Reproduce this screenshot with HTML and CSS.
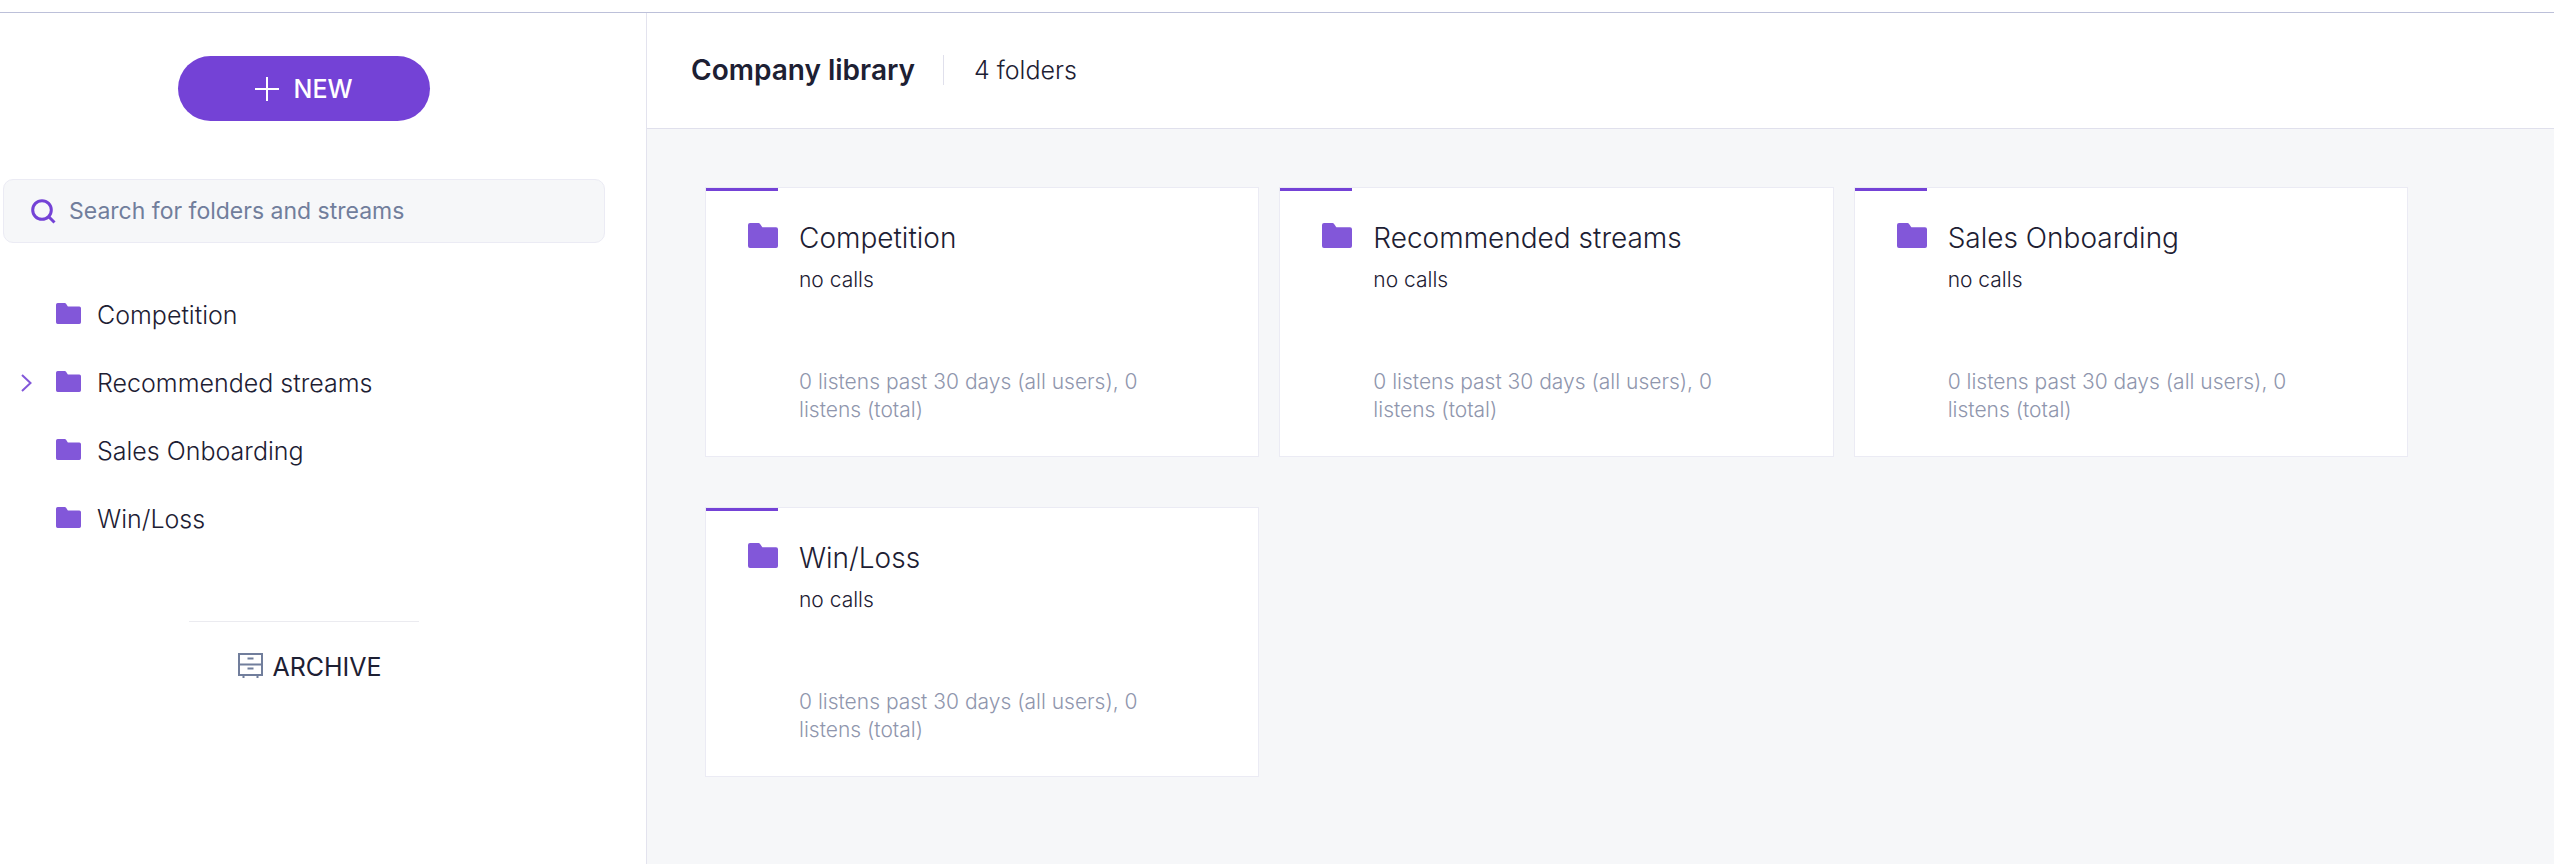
FILE: index.html
```html
<!DOCTYPE html>
<html lang="en">
<head>
  <meta charset="UTF-8">
  <meta name="viewport" content="width=device-width, initial-scale=1.0">
  <title>Company library</title>
  <link rel="stylesheet" href="styles.css">
</head>
<body>
  <!-- Shared icon -->
  <svg class="sprite" aria-hidden="true">
    <symbol id="folder" viewBox="0 0 30 25" preserveAspectRatio="none">
      <path d="M2 0h8.500q1 0 1.600.9L14 3.800q.3.500 1 .5h13q2 0 2 2V23q0 2-2 2H2q-2 0-2-2V2q0-2 2-2z"/>
    </symbol>
  </svg>

  <div class="top-line"></div>

  <div class="layout">
    <!-- Sidebar -->
    <aside class="sidebar">
      <button type="button" class="new-btn">
        <svg width="24" height="24" viewBox="0 0 24 24"><path d="M12 0v24M0 12h24"/></svg>
        NEW
      </button>

      <label class="search">
        <svg width="25" height="25" viewBox="0 0 25 25"><circle cx="11" cy="11" r="9.300"/><path d="M17.500 17.500l6 6"/></svg>
        <input type="text" placeholder="Search for folders and streams" aria-label="Search for folders and streams">
      </label>

      <ul class="tree">
        <li>
          <a href="#"><svg class="folder"><use href="#folder"/></svg>Competition</a>
        </li>
        <li>
          <button type="button" class="expand" aria-label="Expand">
            <svg width="11" height="18" viewBox="0 0 11 18"><path d="M1 1l8.500 8L1 17"/></svg>
          </button>
          <a href="#"><svg class="folder"><use href="#folder"/></svg>Recommended streams</a>
        </li>
        <li>
          <a href="#"><svg class="folder"><use href="#folder"/></svg>Sales Onboarding</a>
        </li>
        <li>
          <a href="#"><svg class="folder"><use href="#folder"/></svg>Win/Loss</a>
        </li>
      </ul>

      <hr class="divider">

      <a href="#" class="archive">
        <svg width="25" height="25" viewBox="0 0 25 25"><path d="M1 1h23v21H1zM1 11.500h23M9.500 5.500h6M9.500 15.500h6M5.500 22v3M19.500 22v3"/></svg>
        ARCHIVE
      </a>
    </aside>

    <!-- Library -->
    <main class="content">
      <header class="header">
        <h1>Company library</h1>
        <span class="count">4 folders</span>
      </header>

      <div class="cards">
        <article class="card">
          <svg class="folder"><use href="#folder"/></svg>
          <div class="card-body">
            <h2>Competition</h2>
            <p class="calls">no calls</p>
            <p class="listens">0 listens past 30 days (all users), 0 listens (total)</p>
          </div>
        </article>
        <article class="card">
          <svg class="folder"><use href="#folder"/></svg>
          <div class="card-body">
            <h2>Recommended streams</h2>
            <p class="calls">no calls</p>
            <p class="listens">0 listens past 30 days (all users), 0 listens (total)</p>
          </div>
        </article>
        <article class="card">
          <svg class="folder"><use href="#folder"/></svg>
          <div class="card-body">
            <h2>Sales Onboarding</h2>
            <p class="calls">no calls</p>
            <p class="listens">0 listens past 30 days (all users), 0 listens (total)</p>
          </div>
        </article>
        <article class="card">
          <svg class="folder"><use href="#folder"/></svg>
          <div class="card-body">
            <h2>Win/Loss</h2>
            <p class="calls">no calls</p>
            <p class="listens">0 listens past 30 days (all users), 0 listens (total)</p>
          </div>
        </article>
      </div>
    </main>
  </div>
</body>
</html>
```
FILE: styles.css
```css
* {
  margin: 0;
  padding: 0;
  box-sizing: border-box;
}

body {
  display: flex;
  flex-direction: column;
  min-height: 100vh;
  background: #fff;
  color: #1d2033;
  font-family: Inter, "Liberation Sans", sans-serif;
  font-size: 25px;
  font-weight: 300;
}

a {
  color: inherit;
  text-decoration: none;
}

button,
input {
  border: none;
  background: none;
  font: inherit;
}

button {
  cursor: pointer;
}

svg {
  flex: none;
  fill: none;
}

.sprite {
  position: absolute;
  width: 0;
  height: 0;
}

.folder {
  width: 25px;
  height: 21px;
  fill: #8257d9;
}

.top-line {
  height: 13px;
  border-bottom: 1px solid #bcc0d9;
}

.layout {
  display: flex;
  flex: 1;
}

/* Sidebar */
.sidebar {
  display: flex;
  flex-direction: column;
  align-items: center;
  flex: none;
  width: 647px;
  padding: 43px 41px 40px 3px;
  border-right: 1px solid #e3e3ee;
}

.new-btn {
  display: flex;
  align-items: center;
  justify-content: center;
  gap: 14px;
  width: 252px;
  height: 65px;
  border-radius: 33px;
  background: #7442d6;
  color: #fff;
  font-weight: 500;
}
.new-btn svg {
  stroke: #fff;
  stroke-width: 2;
}

.search {
  display: flex;
  align-items: center;
  gap: 13px;
  width: 100%;
  height: 64px;
  margin-top: 58px;
  padding: 0 27px;
  border: 1px solid #ebebf4;
  border-radius: 10px;
  background: #f6f7f9;
}
.search svg {
  stroke: #7442d6;
  stroke-width: 3;
}
.search input {
  flex: 1;
  min-width: 0;
  color: #1d2033;
  font-size: 23px;
  font-weight: 400;
  outline: none;
}
.search input::placeholder {
  color: #717e9c;
  opacity: 1;
}

.tree {
  width: 100%;
  margin-top: 38px;
  list-style: none;
}
.tree li {
  display: flex;
  align-items: center;
  position: relative;
  height: 68px;
}
.tree a {
  display: flex;
  align-items: center;
  gap: 16px;
  padding-left: 53px;
}
.tree .folder {
  margin-bottom: 4px;
}

.expand {
  display: flex;
  position: absolute;
  left: 18px;
}
.expand svg {
  stroke: #8257d9;
  stroke-width: 2;
}

.divider {
  width: 230px;
  margin-top: 68px;
  border: none;
  border-top: 1px solid #ebebf0;
}

.archive {
  display: flex;
  align-items: center;
  gap: 9px;
  margin-top: 30px;
  padding-left: 12px;
  font-weight: 400;
}
.archive svg {
  margin-bottom: 4px;
  stroke: #717e9c;
  stroke-width: 2;
}

/* Library */
.content {
  flex: 1;
  min-width: 0;
  background: #f6f7f9;
}

.header {
  display: flex;
  align-items: center;
  height: 116px;
  padding: 0 44px 1px;
  border-bottom: 1px solid #e0e0ec;
  background: #fff;
}
.header h1 {
  font-size: 28px;
  font-weight: 600;
}
.count {
  margin-left: 28px;
  padding-left: 30px;
  border-left: 1px solid #e0e0ec;
}

.cards {
  display: grid;
  grid-template-columns: repeat(3, 1fr);
  gap: 50px 20px;
  padding: 58px 146px 58px 58px;
}

.card {
  display: flex;
  position: relative;
  gap: 21px;
  min-height: 270px;
  padding: 32px 58px 32px 42px;
  border: 1px solid #ebebf4;
  background: #fff;
}
.card::before {
  content: "";
  position: absolute;
  top: 0;
  left: 0;
  width: 72px;
  height: 3px;
  background: #7442d6;
}
.card .folder {
  width: 30px;
  height: 25px;
  margin-top: 3px;
}

.card-body {
  display: flex;
  flex-direction: column;
}
.card-body h2 {
  font-size: 28px;
  font-weight: 300;
  line-height: 36px;
}
.calls {
  margin-top: 10px;
  font-size: 21px;
  line-height: 28px;
}
.listens {
  margin-top: auto;
  color: #8f96ad;
  font-size: 21px;
  line-height: 28px;
}
```
